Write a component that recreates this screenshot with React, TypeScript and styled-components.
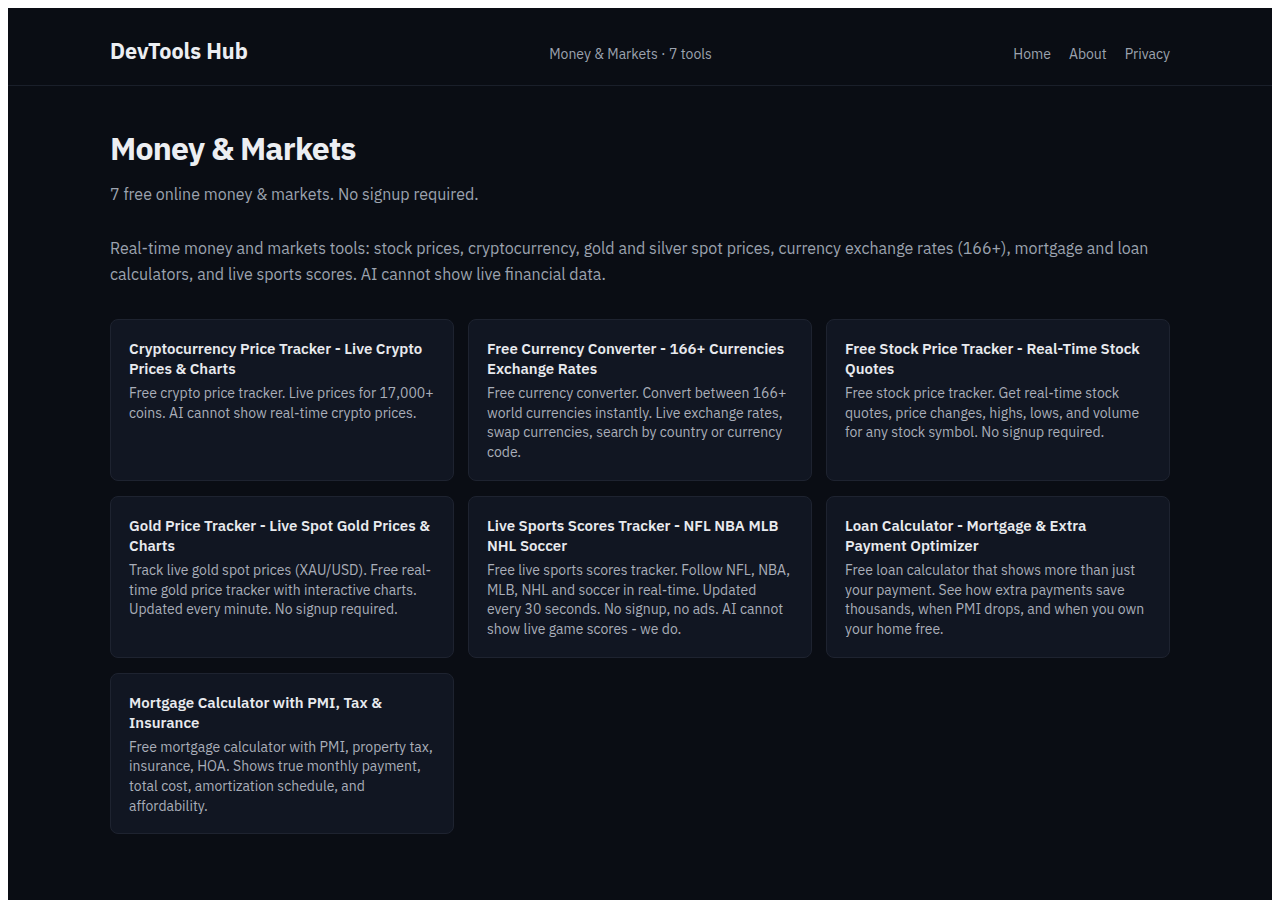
import React from "react";
import styled, {createGlobalStyle} from "styled-components";

const GlobalStyle = createGlobalStyle`
  body {
    background: #ffffff;
    font-family: "IBM Plex Sans", "Noto Sans", "Liberation Sans", sans-serif;
  }
  * {
    box-sizing: border-box;
  }
`

const Page = styled.div`
  background: #0a0d14;
  min-height: 892px;
  color: #e5e7eb;
`
const Header = styled.header`
  border-bottom: 1px solid #1a1f2a;
`
const Bar = styled.div`
  width: 1060px;
  margin: 0 auto;
  height: 77px;
  padding-top: 15px;
  display: flex;
  align-items: center;
  justify-content: space-between;
`
const Logo = styled.div`
  font-size: 21.6px;
  font-weight: 700;
  color: #eceef2;
  margin-top: -6px;
`
const Crumb = styled.div`
  font-size: 14px;
  color: #9ca3af;
`
const Nav = styled.nav`
  display: flex;
  gap: 18px;
  font-size: 14px;
  color: #9ca3af;
`
const Main = styled.main`
  width: 1060px;
  margin: 0 auto;
  padding: 43px 0 64px;
`
const Title = styled.h1`
  margin: 0;
  font-size: 32px;
  line-height: 38px;
  font-weight: 700;
  letter-spacing: -0.025em;
  color: #eceef2;
`
const Lead = styled.p`
  margin: 14px 0 0;
  font-size: 16px;
  line-height: 26px;
  color: #9ca3af;
`
const Intro = styled.p`
  margin: 28px 0 0;
  font-size: 16px;
  line-height: 26px;
  color: #9ca3af;
`
const Grid = styled.div`
  margin-top: 32px;
  display: grid;
  grid-template-columns: repeat(3, 1fr);
  gap: 15px 14px;
`
const Card = styled.a`
  display: block;
  background: #111622;
  border: 1px solid #1e2330;
  border-radius: 8px;
  padding: 19px 18px 17px;
  text-decoration: none;
`
const CardTitle = styled.div`
  font-size: 15px;
  line-height: 20px;
  font-weight: 600;
  color: #e8eaee;
`
const CardText = styled.div`
  margin-top: 5px;
  font-size: 14px;
  line-height: 19.7px;
  color: #a9aeb9;
`

const tools = [
  {
    title: 'Cryptocurrency Price Tracker - Live Crypto Prices & Charts',
    text: 'Free crypto price tracker. Live prices for 17,000+ coins. AI cannot show real-time crypto prices.'
  },
  {
    title: 'Free Currency Converter - 166+ Currencies Exchange Rates',
    text: 'Free currency converter. Convert between 166+ world currencies instantly. Live exchange rates, swap currencies, search by country or currency code.'
  },
  {
    title: 'Free Stock Price Tracker - Real-Time Stock Quotes',
    text: 'Free stock price tracker. Get real-time stock quotes, price changes, highs, lows, and volume for any stock symbol. No signup required.'
  },
  {
    title: 'Gold Price Tracker - Live Spot Gold Prices & Charts',
    text: 'Track live gold spot prices (XAU/USD). Free real-time gold price tracker with interactive charts. Updated every minute. No signup required.'
  },
  {
    title: 'Live Sports Scores Tracker - NFL NBA MLB NHL Soccer',
    text: 'Free live sports scores tracker. Follow NFL, NBA, MLB, NHL and soccer in real-time. Updated every 30 seconds. No signup, no ads. AI cannot show live game scores - we do.'
  },
  {
    title: 'Loan Calculator - Mortgage & Extra Payment Optimizer',
    text: 'Free loan calculator that shows more than just your payment. See how extra payments save thousands, when PMI drops, and when you own your home free.'
  },
  {
    title: 'Mortgage Calculator with PMI, Tax & Insurance',
    text: 'Free mortgage calculator with PMI, property tax, insurance, HOA. Shows true monthly payment, total cost, amortization schedule, and affordability.'
  },
]

const App = () => {
  return (
      <Page>
        <GlobalStyle/>
        <Header>
          <Bar>
            <Logo>DevTools Hub</Logo>
            <Crumb>Money &amp; Markets · 7 tools</Crumb>
            <Nav>
              <span>Home</span>
              <span>About</span>
              <span>Privacy</span>
            </Nav>
          </Bar>
        </Header>
        <Main>
          <Title>Money &amp; Markets</Title>
          <Lead>7 free online money &amp; markets. No signup required.</Lead>
          <Intro>
            Real-time money and markets tools: stock prices, cryptocurrency, gold and silver spot prices, currency exchange rates (166+), mortgage and loan calculators, and live sports scores. AI cannot show live financial data.
          </Intro>
          <Grid>
            {tools.map(t => (
                <Card key={t.title} href="#">
                  <CardTitle>{t.title}</CardTitle>
                  <CardText>{t.text}</CardText>
                </Card>
            ))}
          </Grid>
        </Main>
      </Page>
  )
}

export default App
